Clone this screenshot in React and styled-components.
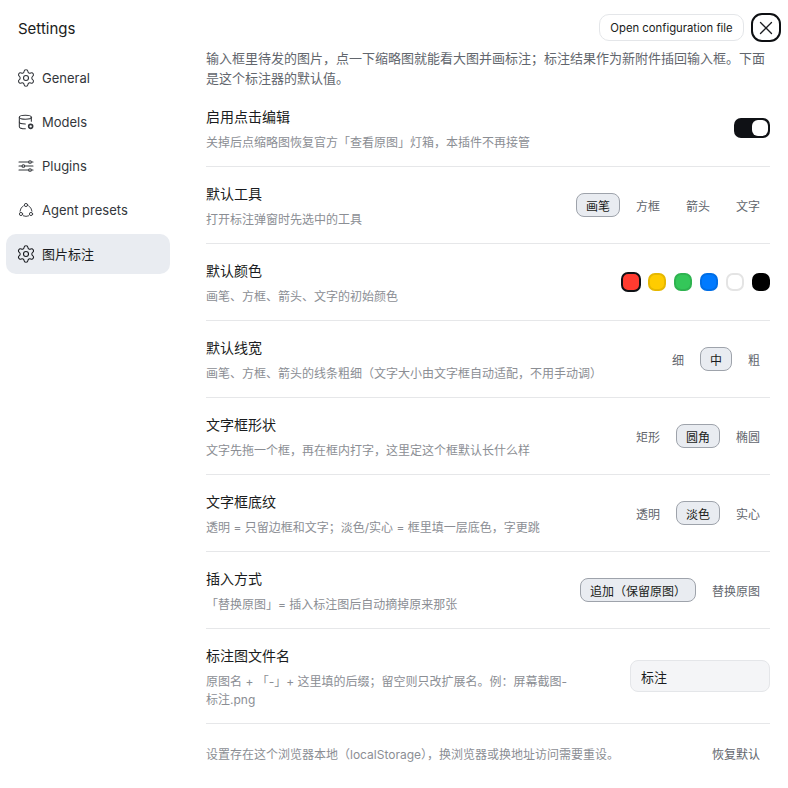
import styled, { createGlobalStyle } from 'styled-components';
import { Settings, X } from 'lucide-react';

const GlobalStyle = createGlobalStyle`
  html, body {
    margin: 0;
    background: #fff;
  }
  * {
    box-sizing: border-box;
  }
`;

/* ---- shell ---- */
const Page = styled.div`
  width: 788px;
  height: 788px;
  display: flex;
  position: relative;
  overflow: hidden;
  background: #fff;
  border-radius: 10px;
  font-family: Inter, "Noto Sans CJK SC", sans-serif;
  color: #1a1c20;
`;

const Sidebar = styled.nav`
  width: 176px;
  flex: none;
  padding: 18px 6px 0;
`;

const SideTitle = styled.h1`
  margin: 0 0 18px;
  padding-left: 12px;
  font-size: 15px;
  line-height: 22px;
  font-weight: 400;
`;

const NavList = styled.div`
  display: flex;
  flex-direction: column;
  gap: 4px;
`;

const NavItem = styled.div`
  height: 40px;
  display: flex;
  align-items: center;
  gap: 8px;
  padding-left: 12px;
  border-radius: 10px;
  font-size: 13px;
  line-height: 16px;
  color: ${(p) => (p.$active ? '#1a1c20' : '#33363b')};
  background: ${(p) => (p.$active ? '#e9ecf1' : 'transparent')};
`;

const NavGear = styled(Settings)`
  margin: 0 -2px;
  flex: none;
`;

const Main = styled.main`
  flex: 1;
  padding: 48px 18px 0 30px;
`;

const Intro = styled.p`
  margin: 0 0 2px;
  font-size: 13px;
  line-height: 20px;
  color: #62666d;
`;

/* ---- top right actions, over the content ---- */
const TopActions = styled.div`
  position: absolute;
  top: 13px;
  right: 7px;
  display: flex;
  align-items: center;
  gap: 7px;
`;

const ConfigButton = styled.button`
  height: 27px;
  width: 145px;
  padding: 0;
  border: 1px solid #e4e6e9;
  border-radius: 10px;
  background: #fff;
  font: 11.3px Inter, sans-serif;
  color: #1a1c20;
`;

const CloseButton = styled.button`
  width: 30px;
  height: 29px;
  padding: 0;
  display: flex;
  align-items: center;
  justify-content: center;
  border: 2px solid #0d0f12;
  border-radius: 11px;
  background: #fff;
  color: #1a1c20;
`;

/* ---- rows ---- */
const Row = styled.section`
  display: flex;
  align-items: center;
  justify-content: space-between;
  min-height: ${(p) => (p.$tall ? '95px' : '77px')};
  border-bottom: 1px solid #e6e7e9;
`;

const RowText = styled.div`
  padding-top: 3px;
  max-width: ${(p) => (p.$narrow ? '370px' : '480px')};
`;

const RowTitle = styled.div`
  font-size: 14px;
  line-height: 20px;
  color: #1a1c20;
`;

const RowDesc = styled.div`
  margin-top: 7px;
  font-size: 12px;
  line-height: 18px;
  color: #8b8e94;
`;

const Segments = styled.div`
  display: flex;
  align-items: center;
  gap: 6px;
`;

const Segment = styled.button`
  height: 24px;
  padding: 0 9px;
  border: 1px solid ${(p) => (p.$on ? '#9ea3ab' : 'transparent')};
  border-radius: 8px;
  background: ${(p) => (p.$on ? '#e9ecf1' : 'transparent')};
  font: 12px Inter, "Noto Sans CJK SC", sans-serif;
  color: ${(p) => (p.$on ? '#1a1c20' : '#62666d')};
`;

const Switch = styled.div`
  width: 36px;
  height: 20px;
  padding: 2px;
  display: flex;
  justify-content: flex-end;
  border-radius: 7px;
  background: #0f1115;
`;

const Knob = styled.div`
  width: 16px;
  height: 16px;
  border-radius: 6px;
  background: #fff;
`;

const Swatches = styled.div`
  display: flex;
  align-items: center;
  gap: 8px;
`;

const Swatch = styled.div`
  width: ${(p) => (p.$on ? '20px' : '18px')};
  height: ${(p) => (p.$on ? '20px' : '18px')};
  margin-right: ${(p) => (p.$on ? '-1px' : '0')};
  border-radius: 7px;
  background: ${(p) => p.$color};
  border: ${(p) => (p.$on ? '2px solid #0f1115' : `2px solid ${p.$edge}`)};
`;

const NameInput = styled.input`
  width: 140px;
  height: 32px;
  padding: 0 10px;
  border: 1px solid #e4e6e9;
  border-radius: 8px;
  outline: none;
  background: #f4f5f7;
  font: 13px Inter, "Noto Sans CJK SC", sans-serif;
  color: #1a1c20;
`;

const Footer = styled.footer`
  height: 58px;
  display: flex;
  align-items: center;
  justify-content: space-between;
`;

const FootNote = styled.span`
  font-size: 12px;
  color: #8b8e94;
`;

const icon = {
  width: 16,
  height: 16,
  viewBox: '0 0 24 24',
  fill: 'none',
  stroke: 'currentColor',
  strokeWidth: 1.6,
  strokeLinecap: 'round',
  strokeLinejoin: 'round',
};

const GearIcon = () => <NavGear size={20} strokeWidth={1.3} />;

const ModelsIcon = () => (
  <svg {...icon}>
    <ellipse cx="11" cy="5" rx="9" ry="3" />
    <path d="M2 5v14c0 1.7 3.8 3 9 3" />
    <path d="M20 5v6" />
    <path d="M2 12c0 1.7 3.8 3 9 3" />
    <circle cx="19" cy="18.5" r="3" strokeWidth="2.4" />
  </svg>
);

const SlidersIcon = () => (
  <svg {...icon}>
    <path d="M1.5 6h14.5M20.5 6h2M1.5 12h4M10 12h12.5M1.5 18h14.5M20.5 18h2" />
    <circle cx="18" cy="6" r="2" />
    <circle cx="8" cy="12" r="2" />
    <circle cx="18" cy="18" r="2" />
  </svg>
);

const AgentIcon = () => (
  <svg {...icon} strokeWidth={1.4}>
    <circle cx="12" cy="4.5" r="2.4" />
    <circle cx="4.5" cy="18" r="2.4" />
    <circle cx="19.5" cy="18" r="2.4" />
    <path d="M8 5.8a10 10 0 0 0-5 8M16 5.8a10 10 0 0 1 5 8M8 20.8a10 10 0 0 0 8 0" />
  </svg>
);

const navItems = [
  { label: 'General', Icon: GearIcon },
  { label: 'Models', Icon: ModelsIcon },
  { label: 'Plugins', Icon: SlidersIcon },
  { label: 'Agent presets', Icon: AgentIcon },
  { label: '图片标注', Icon: GearIcon, active: true },
];

const segmentRows = [
  { title: '默认工具', desc: '打开标注弹窗时先选中的工具', options: ['画笔', '方框', '箭头', '文字'], on: 0 },
  { title: '默认线宽', desc: '画笔、方框、箭头的线条粗细（文字大小由文字框自动适配，不用手动调）', options: ['细', '中', '粗'], on: 1 },
  { title: '文字框形状', desc: '文字先拖一个框，再在框内打字，这里定这个框默认长什么样', options: ['矩形', '圆角', '椭圆'], on: 1 },
  { title: '文字框底纹', desc: '透明 = 只留边框和文字；淡色/实心 = 框里填一层底色，字更跳', options: ['透明', '淡色', '实心'], on: 1 },
  { title: '插入方式', desc: '「替换原图」= 插入标注图后自动摘掉原来那张', options: ['追加（保留原图）', '替换原图'], on: 0 },
];

const colors = [
  { color: '#ff3b30', edge: '#ff3b30', on: true },
  { color: '#ffcc00', edge: '#e6b800' },
  { color: '#34c759', edge: '#2fb350' },
  { color: '#007aff', edge: '#006ee6' },
  { color: '#ffffff', edge: '#e4e4e4' },
  { color: '#000000', edge: '#000000' },
];

const SegmentRow = ({ title, desc, options, on }) => (
  <Row>
    <RowText>
      <RowTitle>{title}</RowTitle>
      <RowDesc>{desc}</RowDesc>
    </RowText>
    <Segments>
      {options.map((o, i) => (
        <Segment key={o} $on={i === on}>{o}</Segment>
      ))}
    </Segments>
  </Row>
);

const App = () => (
  <Page>
    <GlobalStyle />
    <Sidebar>
      <SideTitle>Settings</SideTitle>
      <NavList>
        {navItems.map(({ label, Icon, active }) => (
          <NavItem key={label} $active={active}>
            <Icon />
            {label}
          </NavItem>
        ))}
      </NavList>
    </Sidebar>

    <Main>
      <Intro>
        输入框里待发的图片，点一下缩略图就能看大图并画标注；标注结果作为新附件插回输入框。下面是这个标注器的默认值。
      </Intro>

      <Row>
        <RowText>
          <RowTitle>启用点击编辑</RowTitle>
          <RowDesc>关掉后点缩略图恢复官方「查看原图」灯箱，本插件不再接管</RowDesc>
        </RowText>
        <Switch><Knob /></Switch>
      </Row>

      <SegmentRow {...segmentRows[0]} />

      <Row>
        <RowText>
          <RowTitle>默认颜色</RowTitle>
          <RowDesc>画笔、方框、箭头、文字的初始颜色</RowDesc>
        </RowText>
        <Swatches>
          {colors.map((c) => (
            <Swatch key={c.color} $color={c.color} $edge={c.edge} $on={c.on} />
          ))}
        </Swatches>
      </Row>

      {segmentRows.slice(1).map((r) => (
        <SegmentRow key={r.title} {...r} />
      ))}

      <Row $tall>
        <RowText $narrow>
          <RowTitle>标注图文件名</RowTitle>
          <RowDesc>原图名 + 「-」+ 这里填的后缀；留空则只改扩展名。例：屏幕截图-标注.png</RowDesc>
        </RowText>
        <NameInput defaultValue="标注" />
      </Row>

      <Footer>
        <FootNote>设置存在这个浏览器本地（localStorage），换浏览器或换地址访问需要重设。</FootNote>
        <Segment>恢复默认</Segment>
      </Footer>
    </Main>

    <TopActions>
      <ConfigButton>Open configuration file</ConfigButton>
      <CloseButton><X size={22} strokeWidth={1.4} /></CloseButton>
    </TopActions>
  </Page>
);

export default App;
